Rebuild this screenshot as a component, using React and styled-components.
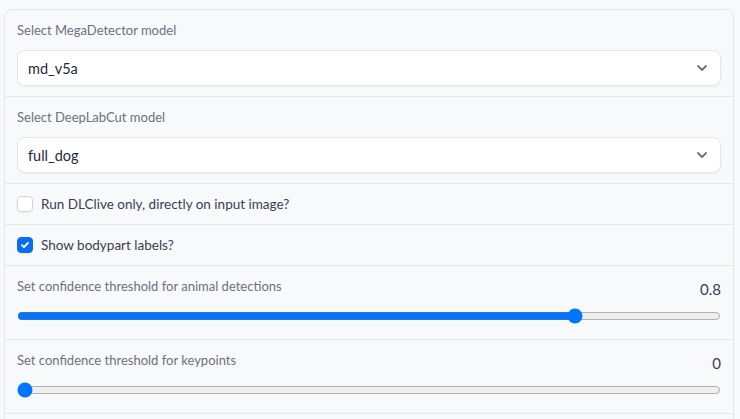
import React from "react";
import styled, { createGlobalStyle } from "styled-components";

const Global = createGlobalStyle`
  html, body { margin: 0; padding: 0; background: #f8f9fb; }
  body { font-family: "Lato", "Liberation Sans", sans-serif; }
`;

const Page = styled.div`
  padding: 9px 6px 0 4px;
  height: 419px;
  box-sizing: border-box;
  overflow: hidden;
`;

const Form = styled.div`
  border: 1px solid #e5e7eb;
  border-radius: 8px;
  background: #e5e7eb;
  display: flex;
  flex-direction: column;
  gap: 1px;
  overflow: hidden;
`;

const Block = styled.div`
  background: #f8f9fb;
  padding: 10px 12px;
  display: flex;
  flex-direction: column;
  gap: ${(p) => p.$gap || 0}px;
  min-height: ${(p) => p.$minH || 0}px;
`;

const Label = styled.span`
  font-size: 13px;
  line-height: 20px;
  color: #6b7280;
`;

const SelectBox = styled.div`
  height: 36px;
  box-sizing: border-box;
  background: #fff;
  border: 1px solid #e5e7eb;
  border-radius: 8px;
  box-shadow: 0 1px 2px rgba(0, 0, 0, 0.05);
  display: flex;
  align-items: center;
  justify-content: space-between;
  padding: 0 12px 0 10px;
  font-size: 14.5px;
  color: #1f2937;
`;

const CheckRow = styled.label`
  display: flex;
  align-items: center;
  gap: 8px;
  height: 20px;
  font-size: 13.5px;
  color: #374151;
`;

const Box = styled.span`
  width: 16px;
  height: 16px;
  box-sizing: border-box;
  border-radius: 4px;
  border: 1px solid ${(p) => (p.$checked ? "#0b6cf2" : "#d1d5db")};
  background: ${(p) => (p.$checked ? "#0b6cf2" : "#fff")};
  display: flex;
  align-items: center;
  justify-content: center;
  box-shadow: 0 1px 2px rgba(0, 0, 0, 0.05);
`;

const SliderHead = styled.div`
  display: flex;
  justify-content: space-between;
  align-items: flex-start;
  height: 25px;
`;

const Value = styled.span`
  font-size: 15px;
  line-height: 20px;
  margin-top: 3px;
  color: #374151;
`;

const Range = styled.input`
  width: 100%;
  display: block;
  height: 16px;
  margin: 7px 0 5px;
`;

const Chevron = () => (
  <svg width="12" height="12" viewBox="0 0 12 12" fill="none">
    <path d="M2 4l4 4 4-4" stroke="#6b7280" strokeWidth="1.8" strokeLinecap="round" strokeLinejoin="round" />
  </svg>
);

const Check = () => (
  <svg width="10" height="10" viewBox="0 0 10 10" fill="none">
    <path d="M2 5.2l2 2 4-4.4" stroke="#fff" strokeWidth="1.8" strokeLinecap="round" strokeLinejoin="round" />
  </svg>
);

const Dropdown = ({ label, value }) => (
  <Block $gap={10}>
    <Label>{label}</Label>
    <SelectBox>
      <span>{value}</span>
      <Chevron />
    </SelectBox>
  </Block>
);

const Checkbox = ({ label, checked }) => (
  <Block>
    <CheckRow>
      <Box $checked={checked}>{checked && <Check />}</Box>
      {label}
    </CheckRow>
  </Block>
);

const Slider = ({ label, value }) => (
  <Block>
    <SliderHead>
      <Label>{label}</Label>
      <Value>{value}</Value>
    </SliderHead>
    <Range type="range" min="0" max="1" step="0.05" defaultValue={value} />
  </Block>
);

export default function App() {
  return (
    <>
      <Global />
      <Page>
        <Form>
          <Dropdown label="Select MegaDetector model" value="md_v5a" />
          <Dropdown label="Select DeepLabCut model" value="full_dog" />
          <Checkbox label="Run DLClive only, directly on input image?" />
          <Checkbox label="Show bodypart labels?" checked />
          <Slider label="Set confidence threshold for animal detections" value="0.8" />
          <Slider label="Set confidence threshold for keypoints" value="0" />
          <Block $minH={40} />
        </Form>
      </Page>
    </>
  );
}
